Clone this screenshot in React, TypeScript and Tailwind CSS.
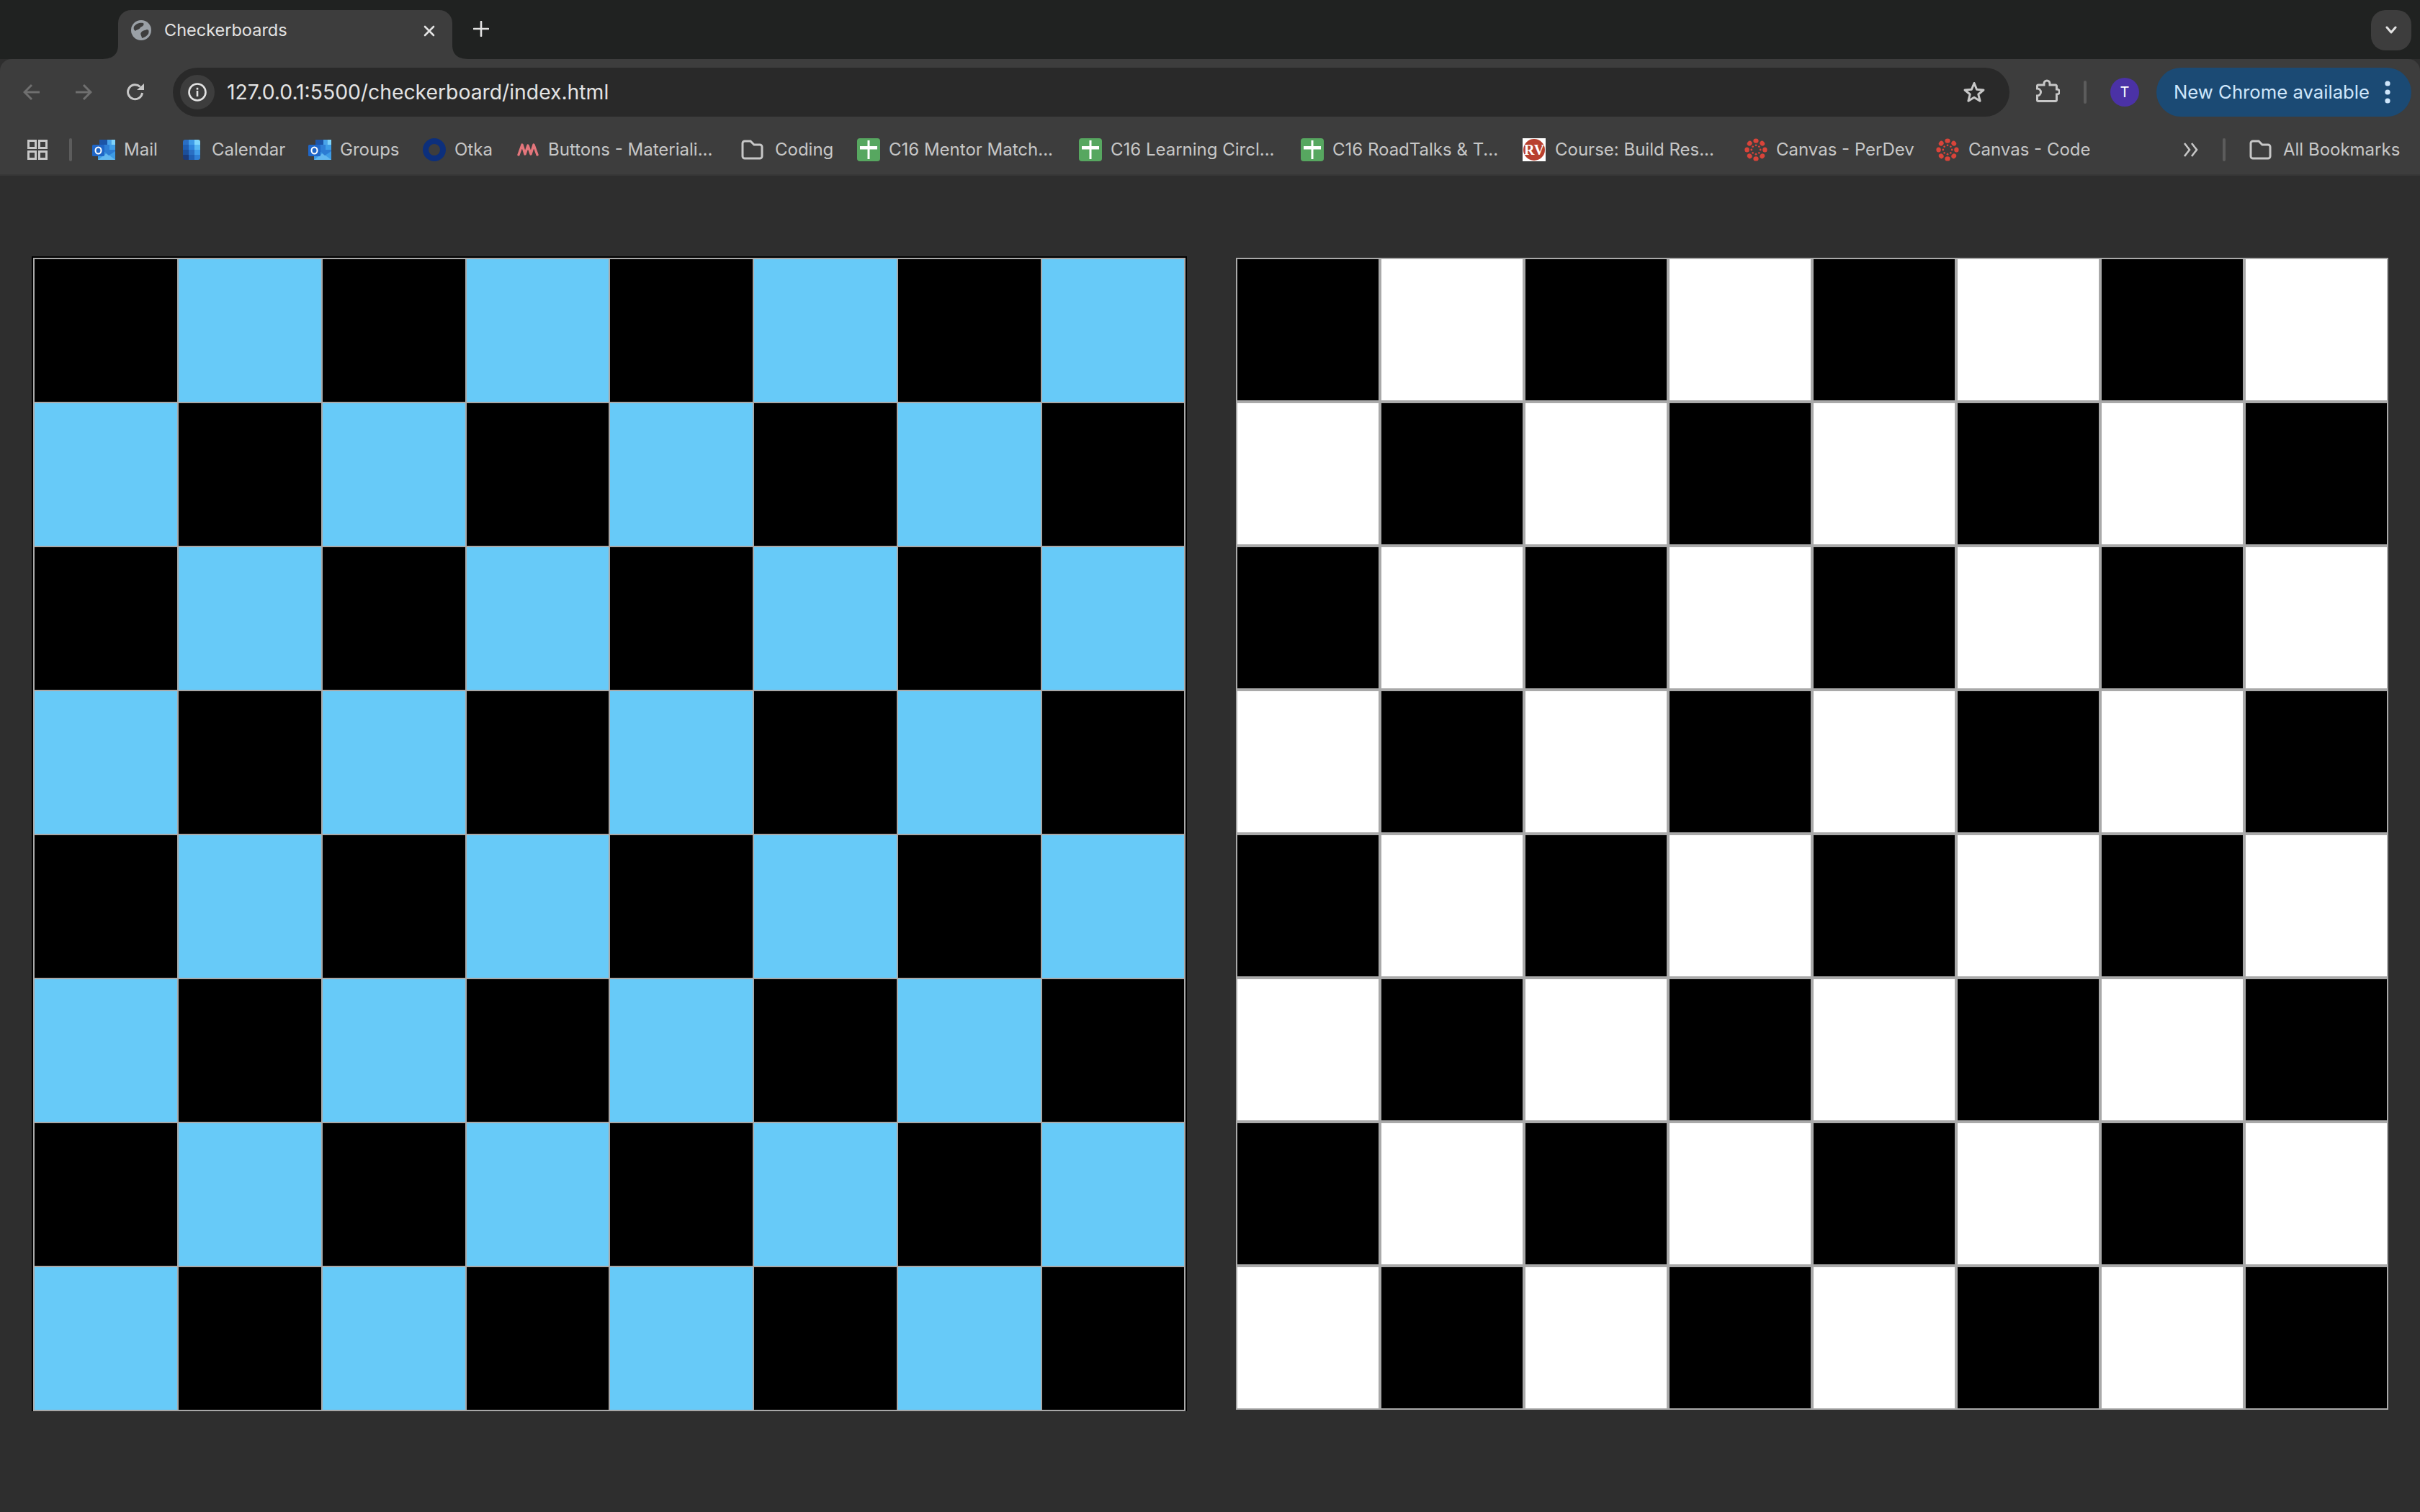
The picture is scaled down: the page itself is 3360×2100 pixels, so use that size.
import React from "react";

const Outlook = () => (
  <svg width="32" height="28" viewBox="0 0 32 28" className="shrink-0">
    <rect x="10" y="0" width="22" height="14" fill="#1f5fb4" />
    <rect x="10" y="0" width="11" height="7" fill="#1c55a8" />
    <rect x="21" y="0" width="5.5" height="7" fill="#49a4ea" />
    <rect x="26.5" y="0" width="5.5" height="7" fill="#7ed4fb" />
    <rect x="16" y="7" width="8" height="7" fill="#2f7fd6" />
    <rect x="24" y="7" width="8" height="7" fill="#3f9ee8" />
    <path d="M8 14 L32 14 V28 H8 Z" fill="#3d9be5" />
    <path d="M8 28 L20 19 L32 28 Z" fill="#62b8f0" />
    <path d="M14 14 L32 14 V16 L23 22 Z" fill="#2c7cd3" />
    <rect x="0" y="7" width="17" height="16" rx="1.5" fill="#1f66c7" />
    <ellipse cx="8.5" cy="15" rx="4" ry="4.6" fill="none" stroke="#fff" strokeWidth="2" />
  </svg>
);

const CalendarIcon = () => (
  <svg width="24" height="28" viewBox="0 0 24 28" className="shrink-0">
    <defs>
      <clipPath id="calclip">
        <rect width="24" height="28" rx="3" />
      </clipPath>
    </defs>
    <g clipPath="url(#calclip)">
      <rect x="0" y="0" width="8" height="7" fill="#2a6fc4" />
      <rect x="8" y="0" width="8" height="7" fill="#3f9be8" />
      <rect x="16" y="0" width="8" height="7" fill="#7ed6fd" />
      <rect x="0" y="7" width="8" height="7" fill="#1f5fb4" />
      <rect x="8" y="7" width="8" height="7" fill="#2f84dc" />
      <rect x="16" y="7" width="8" height="7" fill="#57b7f3" />
      <rect x="0" y="14" width="8" height="7" fill="#1b4f9a" />
      <rect x="8" y="14" width="8" height="7" fill="#2a6fc4" />
      <rect x="16" y="14" width="8" height="7" fill="#3f9be8" />
      <rect x="0" y="21" width="8" height="7" fill="#1a3a78" />
      <rect x="8" y="21" width="8" height="7" fill="#1f5fb4" />
      <rect x="16" y="21" width="8" height="7" fill="#2f7fd6" />
    </g>
  </svg>
);

const OtkaIcon = () => (
  <svg width="32" height="32" viewBox="0 0 32 32" className="shrink-0">
    <circle cx="16" cy="16" r="12" fill="none" stroke="#0c2f7c" strokeWidth="8" />
  </svg>
);

const ButtonsIcon = () => (
  <svg width="30" height="20" viewBox="0 0 30 20" className="shrink-0">
    <path
      d="M2 17 L7 3 L11 16 L15 4 L19 16 L23 3 L28 17"
      fill="none"
      stroke="#e4767c"
      strokeWidth="3.4"
      strokeLinejoin="round"
      strokeLinecap="round"
    />
  </svg>
);

const Folder = () => (
  <svg width="32" height="28" viewBox="0 0 32 28" className="shrink-0">
    <path
      d="M3 5 a3 3 0 0 1 3 -3 h8 l5 5 h8 a3 3 0 0 1 3 3 v13 a3 3 0 0 1 -3 3 h-21 a3 3 0 0 1 -3 -3 Z"
      fill="none"
      stroke="#c7c7c7"
      strokeWidth="3"
    />
  </svg>
);

const Cross = () => (
  <svg width="32" height="32" viewBox="0 0 32 32" className="shrink-0">
    <rect width="32" height="32" rx="4" fill="#57a760" />
    <rect x="14.5" y="3" width="3" height="26" fill="#fff" />
    <rect x="4" y="11" width="24" height="4.5" fill="#fff" />
  </svg>
);

const Course = () => (
  <svg width="32" height="32" viewBox="0 0 32 32" className="shrink-0">
    <rect width="32" height="32" fill="#fff" />
    <circle cx="16" cy="16" r="15" fill="#b8402f" />
    <text x="16" y="23" textAnchor="middle" fontSize="20" fontWeight="700" fontFamily="Liberation Serif, serif" fill="#fff">
      RV
    </text>
  </svg>
);

const CanvasIcon = () => {
  const angles = [0, 45, 90, 135, 180, 225, 270, 315];
  return (
    <svg width="32" height="32" viewBox="0 0 32 32" className="shrink-0">
      {angles.map((a) => (
        <g key={a} transform={`rotate(${a} 16 16)`}>
          <ellipse cx="16" cy="3.6" rx="3.6" ry="3.2" fill="#d9443a" />
          <circle cx="16" cy="9.8" r="1.4" fill="#d9443a" />
        </g>
      ))}
    </svg>
  );
};

const Bookmark = ({
  icon,
  label,
  className,
}: {
  icon: React.ReactNode;
  label: string;
  className: string;
}) => (
  <div className={`flex items-center shrink-0 ${className}`}>
    {icon}
    <span className="text-[24px] leading-none text-[#c7c7c7] whitespace-nowrap">{label}</span>
  </div>
);

const Board = ({
  colour,
  frame,
  grid,
}: {
  colour: string;
  frame: string;
  grid: string;
}) => {
  const cells = Array.from({ length: 64 }, (_, i) => i);
  return (
    <div className={frame}>
      <div className={grid}>
        {cells.map((i) => {
          const dark = (Math.floor(i / 8) + (i % 8)) % 2 === 0;
          return <div key={i} className={dark ? "bg-black" : colour} />;
        })}
      </div>
    </div>
  );
};

export default function App() {
  return (
    <div className="w-[3360px] h-[2100px] flex flex-col bg-[#2e2e2e] overflow-hidden font-['Inter',sans-serif]">
      {/* Tab strip */}
      <div className="h-[82px] shrink-0 bg-[#202221] flex items-start pl-[164px] pr-[12px]">
        <div className="relative mt-[14px] w-[464px] h-[68px] bg-[#3d3d3d] rounded-t-[18px] flex items-center pl-[18px] pb-[12px]">
          <svg className="absolute left-[-24px] bottom-0" width="24" height="20" viewBox="0 0 24 20">
            <path d="M24 0 V20 H0 C14 20 24 16 24 0 Z" fill="#3d3d3d" />
          </svg>
          <svg className="absolute right-[-24px] bottom-0" width="24" height="20" viewBox="0 0 24 20">
            <path d="M0 0 V20 H24 C10 20 0 16 0 0 Z" fill="#3d3d3d" />
          </svg>
          <svg width="28" height="28" viewBox="0 0 28 28" className="shrink-0">
            <circle cx="14" cy="14" r="14" fill="#9aa0a6" />
            <path
              d="M4 9 C7 4 13 3 17 4 C19 7 15 9 13 10 C12 13 8 13 6 15 C4 14 3 12 4 9 Z"
              fill="#3d3d3d"
            />
            <path
              d="M14 17 C16 14 20 14 22 13 C25 13 25 16 24 19 C22 22 19 24 15 25 C15 22 12 20 14 17 Z"
              fill="#3d3d3d"
            />
          </svg>
          <span className="ml-[18px] text-[23.5px] leading-none text-[#e3e3e3] whitespace-nowrap">Checkerboards</span>
          <svg className="absolute left-[423px] top-[20px]" width="18" height="18" viewBox="0 0 18 18">
            <path d="M3 3 L15 15 M15 3 L3 15" stroke="#e3e3e3" strokeWidth="2.6" strokeLinecap="round" />
          </svg>
        </div>
        <svg className="ml-[29px] mt-[29px] shrink-0" width="22" height="22" viewBox="0 0 22 22">
          <path d="M11 1 V21 M1 11 H21" stroke="#e3e3e3" strokeWidth="2.6" strokeLinecap="round" />
        </svg>
        <div className="ml-auto mt-[14px] w-[56px] h-[56px] bg-[#3d3d3d] rounded-[20px] flex items-center justify-center">
          <svg width="16" height="12" viewBox="0 0 16 12">
            <path d="M2 2 L8 9 L14 2" fill="none" stroke="#e3e3e3" strokeWidth="3" strokeLinecap="round" strokeLinejoin="round" />
          </svg>
        </div>
      </div>

      {/* Toolbar */}
      <div className="h-[80px] shrink-0 bg-[#3d3d3d] rounded-t-[16px] flex items-start pt-[12px] relative">
        <div className="w-[240px] h-[68px] shrink-0 flex items-center">
          <svg className="ml-[32px]" width="24" height="24" viewBox="0 0 24 24">
            <path d="M23 12 H2 M12 2 L2 12 L12 22" fill="none" stroke="#6f6f6f" strokeWidth="3" />
          </svg>
          <svg className="ml-[48px]" width="24" height="24" viewBox="0 0 24 24">
            <path d="M1 12 H22 M12 2 L22 12 L12 22" fill="none" stroke="#6f6f6f" strokeWidth="3" />
          </svg>
          <svg className="ml-[48px]" width="24" height="24" viewBox="0 0 24 24">
            <path d="M21.5 13 A10 10 0 1 1 18.5 4.5" fill="none" stroke="#c7c7c7" strokeWidth="3" />
            <path d="M14 9 H24 V0 Z" fill="#c7c7c7" />
          </svg>
        </div>
        <div className="w-[2550px] h-[68px] shrink-0 bg-[#292929] rounded-full flex items-center pl-[10px] pr-[33px]">
          <div className="w-[48px] h-[48px] rounded-full bg-[#3d3d3d] flex items-center justify-center shrink-0">
            <svg width="26" height="26" viewBox="0 0 26 26">
              <circle cx="13" cy="13" r="11.5" fill="none" stroke="#e3e3e3" strokeWidth="2.6" />
              <rect x="11.7" y="11" width="2.6" height="8" fill="#e3e3e3" />
              <rect x="11.7" y="6.8" width="2.6" height="2.8" fill="#e3e3e3" />
            </svg>
          </div>
          <span className="ml-[17px] text-[28.3px] leading-none text-[#e3e3e3] whitespace-nowrap">127.0.0.1:5500/checkerboard/index.html</span>
          <svg className="ml-auto" width="32" height="32" viewBox="0 0 32 32">
            <path
              d="M16 3.5 L19.6 12.3 L29 13 L21.8 19 L24.1 28.2 L16 23.2 L7.9 28.2 L10.2 19 L3 13 L12.4 12.3 Z"
              fill="none"
              stroke="#c7c7c7"
              strokeWidth="3"
              strokeLinejoin="round"
            />
          </svg>
        </div>
        <svg className="ml-[36px] mt-[16px] shrink-0" width="34" height="34" viewBox="0 0 34 34">
          <path
            d="M4 8 H12 V6 A4 4 0 0 1 20 6 V8 H28 A1.5 1.5 0 0 1 29.5 9.5 V14 H30 A3.5 3.5 0 0 1 30 21 H29.5 V29 A1.5 1.5 0 0 1 28 30.5 H4 A1.5 1.5 0 0 1 2.5 29 V23 A5 5 0 0 0 2.5 13 V9.5 A1.5 1.5 0 0 1 4 8 Z"
            fill="none"
            stroke="#c7c7c7"
            strokeWidth="3"
          />
        </svg>
        <div className="ml-[33px] mt-[18px] w-[4px] h-[32px] shrink-0 rounded-full bg-[#5c5c5c]" />
        <div className="ml-[33px] mt-[14px] w-[40px] h-[40px] shrink-0 rounded-full bg-[#4b32a6] flex items-center justify-center text-white text-[20px] leading-none">
          T
        </div>
        <div className="ml-[24px] w-[354px] h-[68px] shrink-0 rounded-full bg-[#1b4a74] flex items-center pl-[24px]">
          <span className="text-[25.7px] leading-none text-[#cfe6fb] whitespace-nowrap">New Chrome available</span>
          <svg className="absolute left-[3309px] top-[29px]" width="12" height="34" viewBox="0 0 12 34">
            <circle cx="6" cy="5" r="3.6" fill="#cfe6fb" />
            <circle cx="6" cy="17" r="3.6" fill="#cfe6fb" />
            <circle cx="6" cy="29" r="3.6" fill="#cfe6fb" />
          </svg>
        </div>
      </div>

      {/* Bookmarks bar */}
      <div className="h-[82px] shrink-0 bg-[#3d3d3d] border-b-2 border-[#373737] flex items-center pt-[12px] pl-[38px]">
        <svg className="shrink-0" width="28" height="28" viewBox="0 0 28 28">
          <path
            d="M1.5 1.5 H11.5 V11.5 H1.5 Z M16.5 1.5 H26.5 V11.5 H16.5 Z M1.5 16.5 H11.5 V26.5 H1.5 Z M16.5 16.5 H26.5 V26.5 H16.5 Z"
            fill="none"
            stroke="#c7c7c7"
            strokeWidth="3"
          />
        </svg>
        <div className="ml-[30px] mr-[28px] w-[4px] h-[32px] shrink-0 rounded-full bg-[#5c5c5c]" />
        <Bookmark className="w-[126px] gap-[12px]" icon={<Outlook />} label="Mail" />
        <Bookmark className="w-[174px] gap-[16px]" icon={<CalendarIcon />} label="Calendar" />
        <Bookmark className="w-[159px] gap-[12px]" icon={<Outlook />} label="Groups" />
        <Bookmark className="w-[131px] gap-[12px]" icon={<OtkaIcon />} label="Otka" />
        <Bookmark className="w-[310px] gap-[13px]" icon={<ButtonsIcon />} label="Buttons - Materiali..." />
        <Bookmark className="w-[162px] gap-[16px]" icon={<Folder />} label="Coding" />
        <Bookmark className="w-[308px] gap-[12px]" icon={<Cross />} label="C16 Mentor Match..." />
        <Bookmark className="w-[308px] gap-[12px]" icon={<Cross />} label="C16 Learning Circl..." />
        <Bookmark className="w-[308px] gap-[12px]" icon={<Cross />} label="C16 RoadTalks & T..." />
        <Bookmark className="w-[308px] gap-[13px]" icon={<Course />} label="Course: Build Res..." />
        <Bookmark className="w-[266px] gap-[12px]" icon={<CanvasIcon />} label="Canvas - PerDev" />
        <Bookmark className="w-[343px] gap-[13px]" icon={<CanvasIcon />} label="Canvas - Code" />
        <svg className="shrink-0" width="22" height="22" viewBox="0 0 22 22">
          <path d="M2 2 L9 11 L2 20 M12 2 L19 11 L12 20" fill="none" stroke="#c7c7c7" strokeWidth="2.6" />
        </svg>
        <div className="ml-[33px] mr-[32px] w-[4px] h-[32px] shrink-0 rounded-full bg-[#5c5c5c]" />
        <Bookmark className="gap-[16px]" icon={<Folder />} label="All Bookmarks" />
      </div>

      {/* Page */}
      <div className="flex items-start pt-[112px] pl-[44px]">
        <Board
          colour="bg-[#67caf8]"
          frame="w-[1604px] border-x-2 border-t-2 border-black shrink-0"
          grid="grid grid-cols-[198px_198px_198px_197px_198px_198px_198px_197px] auto-rows-[198px] gap-[2px] p-[2px] bg-[#a9a9a9]"
        />
        <Board
          colour="bg-white"
          frame="ml-[68px] mt-[2px] w-[1600px] shrink-0"
          grid="grid grid-cols-8 auto-rows-[196px] gap-[4px] p-[2px] bg-[#a9a9a9]"
        />
      </div>
    </div>
  );
}
